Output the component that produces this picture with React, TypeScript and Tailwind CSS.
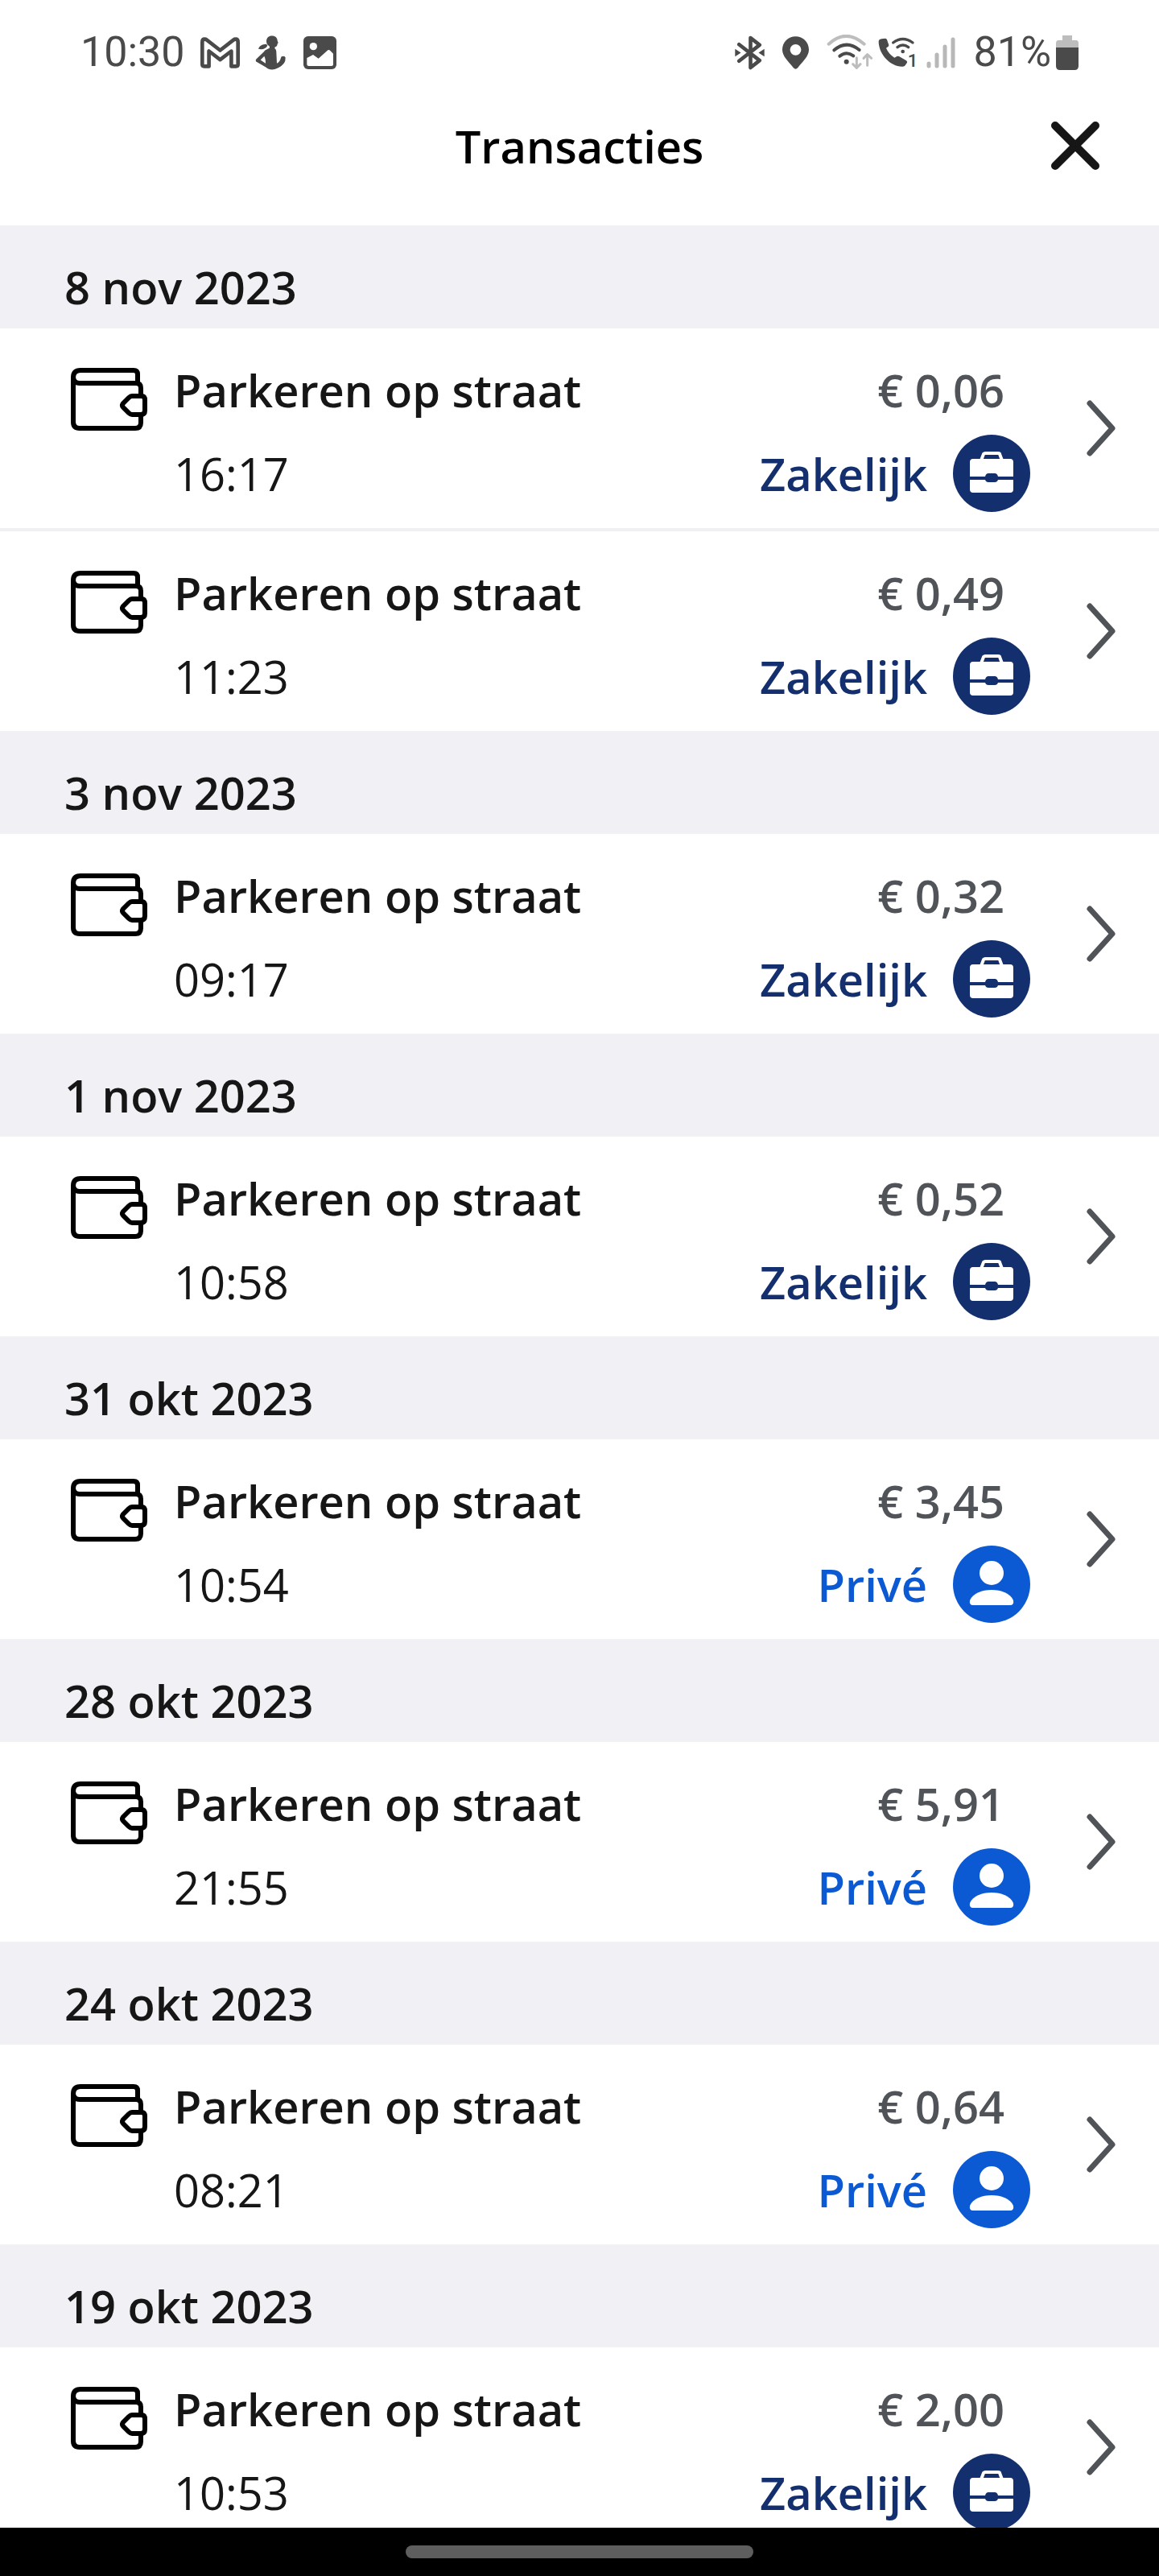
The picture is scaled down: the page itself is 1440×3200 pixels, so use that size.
type Kind = "Zakelijk" | "Privé";

type Transaction = {
  time: string;
  amount: string;
  kind: Kind;
};

const GROUPS: { date: string; items: Transaction[] }[] = [
  {
    date: "8 nov 2023",
    items: [
      { time: "16:17", amount: "€ 0,06", kind: "Zakelijk" },
      { time: "11:23", amount: "€ 0,49", kind: "Zakelijk" },
    ],
  },
  { date: "3 nov 2023", items: [{ time: "09:17", amount: "€ 0,32", kind: "Zakelijk" }] },
  { date: "1 nov 2023", items: [{ time: "10:58", amount: "€ 0,52", kind: "Zakelijk" }] },
  { date: "31 okt 2023", items: [{ time: "10:54", amount: "€ 3,45", kind: "Privé" }] },
  { date: "28 okt 2023", items: [{ time: "21:55", amount: "€ 5,91", kind: "Privé" }] },
  { date: "24 okt 2023", items: [{ time: "08:21", amount: "€ 0,64", kind: "Privé" }] },
  { date: "19 okt 2023", items: [{ time: "10:53", amount: "€ 2,00", kind: "Zakelijk" }] },
];

function MailIcon() {
  return (
    <svg viewBox="0 0 148 116" className="h-[39px] w-[49px]" aria-hidden="true">
      <path
        d="M14 109Q7 109 7 102V18Q7 7 16 7Q20 7 24 10L74 49L124 10Q128 7 132 7Q141 7 141 18V102Q141 109 134 109H116V52L74 84L32 52V109Z"
        fill="none"
        stroke="currentColor"
        strokeWidth="14"
        strokeLinejoin="round"
      />
    </svg>
  );
}

function RunnerIcon() {
  return (
    <svg viewBox="0 0 123 128" className="h-[43px] w-[41px]" fill="currentColor" aria-hidden="true">
      <path d="M62 1C76 1 83 9 83 19L86 27L83 31C83 38 79 42 74 42L73 48C78 51 79 56 79 62L81 104C90 99 93 93 95 86L98 78Q111 74 113 82L112 94C107 108 94 117 82 122C68 130 50 128 40 118L5 98Q0 94 4 88L32 61C38 52 48 51 54 47L53 39C46 36 42 29 42 21C42 9 51 1 62 1Z" />
      <path d="M42 32C25 33 16 39 12 50C27 54 40 49 46 38Z" />
      <path d="M34 77L20 91L39 104C39 94 38 85 34 77Z" className="fill-white" />
    </svg>
  );
}

function PictureIcon() {
  return (
    <svg viewBox="0 0 123 123" className="h-[41px] w-[41px]" aria-hidden="true">
      <rect width="123" height="123" rx="17" fill="currentColor" />
      <circle cx="37" cy="38" r="14" className="fill-white" />
      <path
        d="M13 81L36 69L56 83L91 52Q96 50 100 54L111 65V106Q111 111 104 111H20Q13 111 13 105Z"
        className="fill-white"
      />
    </svg>
  );
}

function BluetoothIcon() {
  return (
    <svg viewBox="0 0 110 130" className="h-[43px] w-[37px]" aria-hidden="true">
      <path
        d="M15 34L92 94L58 121V9L92 36L15 96"
        fill="none"
        stroke="currentColor"
        strokeWidth="14"
        strokeLinecap="round"
        strokeLinejoin="round"
      />
      <path d="M0 51L22 65L0 79ZM110 51L88 65L110 79Z" fill="currentColor" />
    </svg>
  );
}

function PinIcon() {
  return (
    <svg viewBox="0 0 100 122" className="h-[41px] w-[33px]" aria-hidden="true">
      <path
        fillRule="evenodd"
        fill="currentColor"
        d="M50 0C22 0 0 22 0 50C0 75 23 94 42 118Q50 126 58 118C77 94 100 75 100 50C100 22 78 0 50 0ZM50 29A21 21 0 1 1 50 71A21 21 0 1 1 50 29Z"
      />
    </svg>
  );
}

function WifiIcon() {
  return (
    <svg viewBox="0 0 174 132" className="h-[44px] w-[58px]" fill="none" strokeLinecap="round" aria-hidden="true">
      <path d="M8 35Q72 -24 140 35" className="stroke-[#bdbdbd]" strokeWidth="12" />
      <path d="M28 58Q74 18 122 57" stroke="currentColor" strokeWidth="12" />
      <path d="M49 80Q74 60 100 79" stroke="currentColor" strokeWidth="12" />
      <circle cx="74" cy="101" r="9" fill="currentColor" />
      <path
        d="M112 86V123M98 110L112 124L126 110M152 115V76M138 88L152 74L167 88"
        className="stroke-[#bdbdbd]"
        strokeWidth="9"
        strokeLinejoin="round"
      />
    </svg>
  );
}

function WifiCallIcon() {
  return (
    <svg viewBox="0 -14 150 144" className="h-12 w-[50px]" fill="none" aria-hidden="true">
      <path
        d="M13 8L27 6Q31 7 33 11L40 31Q40 35 37 37L30 42C36 57 47 68 61 78L70 73Q74 71 78 73L104 88Q110 91 108 96L101 107Q97 112 90 111C47 112 4 68 2 20Q1 10 13 8Z"
        fill="currentColor"
      />
      <path d="M56 22Q92 -5 129 22M72 39Q92 23 113 39" stroke="currentColor" strokeWidth="10" strokeLinecap="round" />
      <circle cx="92" cy="55" r="7" fill="currentColor" />
      <text x="110" y="112" fontSize="66" fontWeight="500" fill="currentColor">
        1
      </text>
    </svg>
  );
}

function SignalIcon() {
  return (
    <svg viewBox="0 0 36 39" className="h-[39px] w-9" aria-hidden="true">
      <path
        d="M3 33V36M13 22V36M23 12V36M33 3V36"
        className="stroke-[#b8b8b8]"
        strokeWidth="5"
        strokeLinecap="round"
      />
    </svg>
  );
}

function BatteryIcon() {
  return (
    <svg viewBox="0 0 28 43" className="h-[43px] w-7" aria-hidden="true">
      <path d="M8 0H20V6H25Q28 6 28 10V16H0V10Q0 6 3 6H8Z" className="fill-[#bdbdbd]" />
      <path d="M0 15H28V38Q28 43 23 43H5Q0 43 0 38Z" fill="currentColor" />
    </svg>
  );
}

function WalletIcon() {
  return (
    <svg
      viewBox="1 0 96 80"
      className="mt-12 h-20 w-24 shrink-0"
      fill="none"
      stroke="#000"
      strokeWidth="6"
      strokeLinejoin="round"
      aria-hidden="true"
    >
      <path d="M84 19V9Q84 4 79 4H13Q4 4 4 13V68Q4 76 12 76H81Q88 76 88 69V60" />
      <path d="M4 12Q4 20 12 20H82Q88 20 88 26V36" />
      <path d="M77 36H89Q93 36 93 41V54Q93 59 88 59H77Q75 59 73 57L66 50Q64 48 66 45L73 38Q75 36 77 36Z" />
    </svg>
  );
}

function BriefcaseBadge() {
  return (
    <svg viewBox="0 0 96 96" className="h-24 w-24" aria-hidden="true">
      <circle cx="48" cy="48" r="48" fill="#132f6e" />
      <path d="M35 32L38 24Q39 23 40 23H56Q58 23 58 24L61 32" fill="none" stroke="#fff" strokeWidth="4" />
      <path
        d="M25 30H71Q75 30 75 34V52H56Q55 48 52 48H44Q41 48 40 52H21V34Q21 30 25 30ZM21 56H40Q41 59 44 59H52Q55 59 56 56H75V68Q75 72 71 72H25Q21 72 21 68Z"
        fill="#fff"
      />
    </svg>
  );
}

function PersonBadge() {
  return (
    <svg viewBox="0 0 96 96" className="h-24 w-24" aria-hidden="true">
      <circle cx="48" cy="48" r="48" fill="#0b5ad4" />
      <circle cx="48" cy="34" r="15" fill="#fff" />
      <path d="M21 68C25 59 36 55 48 55S71 59 75 68Q76 74 71 74H25Q20 74 21 68Z" fill="#fff" />
    </svg>
  );
}

function StatusBar() {
  return (
    <div className="flex h-[130px] shrink-0 items-center justify-between px-[100px] font-[Roboto,sans-serif] text-[52px] text-[#4a4a4a]">
      <div className="flex items-center gap-[19px]">
        <span>10:30</span>
        <MailIcon />
        <RunnerIcon />
        <PictureIcon />
      </div>
      <div className="flex items-center gap-[22px]">
        <BluetoothIcon />
        <PinIcon />
        <div className="flex items-center gap-[10px]">
          <div className="flex items-center gap-[6px]">
            <WifiIcon />
            <WifiCallIcon />
          </div>
          <SignalIcon />
        </div>
        <div className="flex items-center gap-[6px]">
          <span>81%</span>
          <BatteryIcon />
        </div>
      </div>
    </div>
  );
}

function TransactionRow({ time, amount, kind }: Transaction) {
  const business = kind === "Zakelijk";

  return (
    <a href="#" className="flex h-[248px] items-start pr-[52px] pl-[88px]">
      <WalletIcon />
      <div className="ml-8 flex-1 pt-[38px] text-[#161616]">
        <p className="font-semibold">Parkeren op straat</p>
        <p className="mt-[18px] leading-[96px]">{time}</p>
      </div>
      <div className="flex flex-col items-end pt-[38px] font-semibold">
        <p className="pr-8 text-[#505357]">{amount}</p>
        <div
          className={`mt-[18px] flex items-center gap-8 leading-[96px] ${
            business ? "text-[#132f6e]" : "text-[#0b5ad4]"
          }`}
        >
          <span>{kind}</span>
          {business ? <BriefcaseBadge /> : <PersonBadge />}
        </div>
      </div>
      <svg
        viewBox="0 0 40 72"
        className="ml-[68px] h-[72px] w-10 self-center"
        fill="none"
        stroke="#505357"
        strokeWidth="7"
        strokeLinecap="round"
        strokeLinejoin="round"
        aria-hidden="true"
      >
        <path d="M6 5L34 36L6 67" />
      </svg>
    </a>
  );
}

export default function App() {
  return (
    <div className="flex h-screen flex-col bg-white font-['Open_Sans','Noto_Sans',sans-serif] text-[56px] leading-[76px]">
      <StatusBar />

      {/* Title bar */}
      <header className="grid shrink-0 grid-cols-[1fr_auto_1fr] items-center px-[70px] pt-[13px] pb-[61px]">
        <h1 className="col-start-2 font-semibold text-black">Transacties</h1>
        <button type="button" aria-label="Sluiten" className="justify-self-end">
          <svg viewBox="0 0 68 68" className="h-[68px] w-[68px]" stroke="#161616" strokeWidth="10" strokeLinecap="round">
            <path d="M9 9L59 59M59 9L9 59" />
          </svg>
        </button>
      </header>

      {/* Transactions per day */}
      <main className="min-h-0 flex-1 overflow-y-auto [scrollbar-width:none]">
        {GROUPS.map((group) => (
          <section key={group.date}>
            <h2 className="bg-[#f0f0f5] px-20 pt-[38px] pb-[14px] font-semibold text-[#161616]">{group.date}</h2>
            <ul className="divide-y-4 divide-[#f0f0f2]">
              {group.items.map((item) => (
                <li key={item.time}>
                  <TransactionRow {...item} />
                </li>
              ))}
            </ul>
          </section>
        ))}
      </main>

      {/* Gesture bar */}
      <div className="flex h-[60px] shrink-0 items-center justify-center bg-black">
        <div className="h-4 w-[30%] rounded-full bg-[#5e5e5e]" />
      </div>
    </div>
  );
}
